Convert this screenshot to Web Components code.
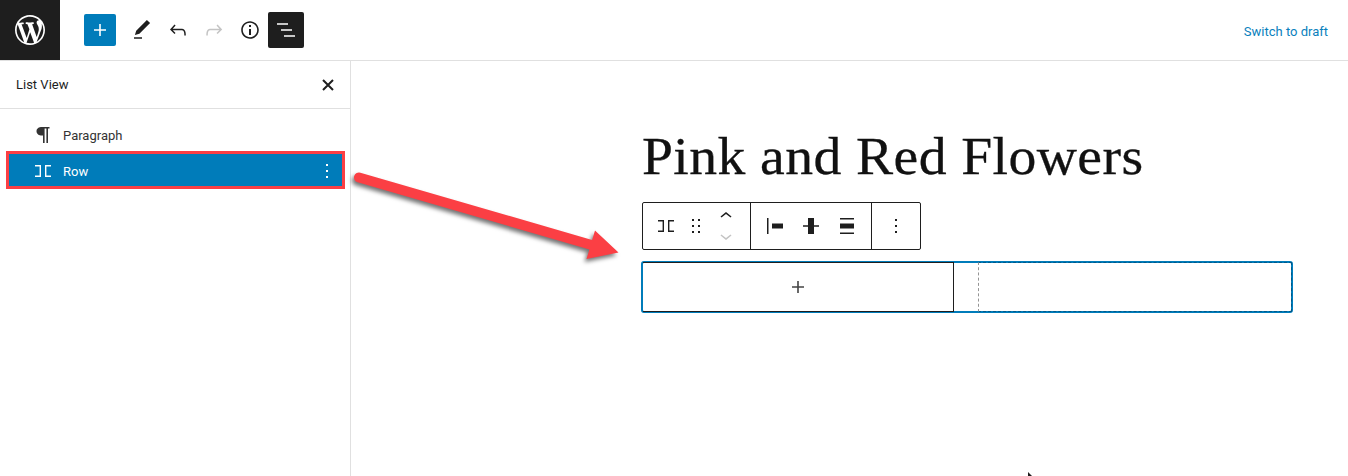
<!DOCTYPE html>
<html lang="en">
<head>
<meta charset="utf-8">
<title>Pink and Red Flowers</title>
<style>
html, body { margin: 0; height: 100%; background: #fff; overflow: hidden; }
body { font-family: Roboto, "Open Sans", sans-serif; color: #1e1e1e; }
</style>
</head>
<body>
<wp-editor>
  <wp-topbar slot="top"></wp-topbar>
  <wp-listview slot="side">
    <wp-listitem icon="paragraph">Paragraph</wp-listitem>
    <wp-listitem icon="row" selected>Row</wp-listitem>
  </wp-listview>
  <wp-canvas slot="main"></wp-canvas>
</wp-editor>

<script>
const ICONS = {
  wp: `<path d="M20 10c0-5.51-4.49-10-10-10C4.48 0 0 4.49 0 10c0 5.52 4.48 10 10 10 5.51 0 10-4.48 10-10zM7.78 15.37L4.37 6.22c.55-.02 1.17-.08 1.17-.08.5-.06.44-1.13-.06-1.11 0 0-1.45.11-2.37.11-.18 0-.37 0-.58-.01C4.12 2.69 6.87 1.11 10 1.11c2.33 0 4.45.87 6.05 2.34-.68-.11-1.65.39-1.65 1.58 0 .74.45 1.36.9 2.1.35.61.55 1.36.55 2.46 0 1.49-1.4 5-1.4 5l-3.03-8.37c.54-.02.82-.17.82-.17.5-.05.44-1.25-.06-1.22 0 0-1.44.12-2.38.12-.87 0-2.33-.12-2.33-.12-.5-.03-.56 1.2-.06 1.22l.92.08 1.26 3.41zM17.41 10c.24-.64.74-1.87.43-4.25.7 1.29 1.05 2.71 1.05 4.25 0 3.29-1.73 6.24-4.4 7.78.97-2.59 1.94-5.2 2.92-7.78zM6.1 18.09C3.12 16.65 1.11 13.53 1.11 10c0-1.3.23-2.48.72-3.59C3.25 10.3 4.67 14.2 6.1 18.09zm4.03-6.63l2.58 6.98c-.86.29-1.76.45-2.71.45-.79 0-1.57-.11-2.29-.33.81-2.38 1.62-4.74 2.42-7.1z"/>`,
  plus: `<path d="M18 11.2h-5.2V6h-1.6v5.2H6v1.6h5.2V18h1.6v-5.2H18z"/>`,
  pencil: `<path d="M20.1 5.1L16.9 2 6.2 12.7l-1.3 4.4 4.5-1.3L20.1 5.1zM4 20.8h8v-1.5H4v1.5z"/>`,
  undo: `<path d="M18.3 11.7c-.6-.6-1.4-.9-2.3-.9H6.7l2.9-3.3-1.1-1-4.5 5L8.5 16l1-1-2.7-2.7H16c.5 0 .9.2 1.3.5 1 1 1 3.4 1 4.5v.3h1.5v-.2c0-1.5 0-4.3-1.5-5.7z"/>`,
  redo: `<path d="M15.6 6.5l-1.1 1 2.9 3.3H8c-.9 0-1.7.3-2.3.9-1.4 1.5-1.4 4.2-1.4 5.6v.2h1.5v-.3c0-1.1 0-3.5 1-4.5.3-.3.7-.5 1.3-.5h9.2L14.5 15l1.1 1.1 4.6-4.6-4.6-5z"/>`,
  info: `<path d="M12 3.2c-4.8 0-8.8 3.9-8.8 8.8 0 4.8 3.9 8.8 8.8 8.8 4.8 0 8.8-3.9 8.8-8.8 0-4.8-4-8.8-8.8-8.8zm0 16c-4 0-7.2-3.3-7.2-7.2C4.8 8 8 4.8 12 4.8s7.2 3.3 7.2 7.2c0 4-3.2 7.2-7.2 7.2zM11 17h2v-6h-2v6zm0-8h2V7h-2v2z"/>`,
  list: `<path d="M3 5.2h11v1.6H3zM7 11.2h11v1.6H7zM10 17.2h11v1.6H10z"/>`,
  close: `<path fill="none" stroke="currentColor" stroke-width="2" d="M7 7l10 10M17 7L7 17"/>`,
  paragraph: `<path d="M11 4h7.5v1.5H17V20h-1.6V5.5h-1.8V20H12v-7.5h-1C8 12.5 5.5 11 5.5 8.2S8 4 11 4z"/>`,
  row: `<path fill="none" stroke="currentColor" stroke-width="1.4" d="M4 6.7h5.3v10.6H4M20 6.7h-5.3v10.6H20"/>`,
  dots: `<path d="M13 19h-2v-2h2v2zm0-6h-2v-2h2v2zm0-6h-2V5h2v2z"/>`,
  drag: `<path d="M8 7h2V5H8v2zm0 6h2v-2H8v2zm0 6h2v-2H8v2zm6-14v2h2V5h-2zm0 8h2v-2h-2v2zm0 6h2v-2h-2v2z"/>`,
  up: `<path d="M6.5 12.4L12 8l5.5 4.4-.9 1.2L12 10l-4.5 3.6-1-1.2z"/>`,
  down: `<path d="M17.5 11.6L12 16l-5.5-4.4.9-1.2L12 14l4.5-3.6 1 1.2z"/>`,
  alignStart: `<path d="M4 4h1.5v16H4zM9 9.5h11v5H9z"/>`,
  alignCenter: `<path d="M4 11.2h16v1.6H4zM9 4h6v16H9z"/>`,
  alignStretch: `<path d="M5 4h14v1.5H5zM5 18.5h14V20H5zM5 9.5h14v5H5z"/>`
};

// small svg icon, pick by name
class WpIcon extends HTMLElement {
  constructor() {
    super();
    this.attachShadow({ mode: "open" });
  }
  connectedCallback() {
    const name = this.getAttribute("name");
    const size = this.getAttribute("size") || 24;
    const box = name === "wp" ? "0 0 20 20" : "0 0 24 24";
    this.shadowRoot.innerHTML = `<style>
:host { display: inline-flex; line-height: 0; }
svg { fill: currentColor; display: block; }
</style><svg width="${size}" height="${size}" viewBox="${box}">${ICONS[name]}</svg>`;
  }
}
customElements.define("wp-icon", WpIcon);

class WpEditor extends HTMLElement {
  constructor() {
    super();
    this.attachShadow({ mode: "open" }).innerHTML = `<style>
:host { display: flex; flex-direction: column; height: 476px; width: 1348px; position: relative; overflow: hidden; }
#body { display: flex; flex: 1; min-height: 0; }
#arrow { position: absolute; left: 340px; top: 160px; filter: drop-shadow(-2px 3px 2px rgba(0,0,0,.55)); }
#cursor { position: absolute; left: 1028px; top: 472px; }
</style>
<slot name="top"></slot>
<div id="body"><slot name="side"></slot><slot name="main"></slot></div>
<svg id="arrow" width="290" height="110" viewBox="0 0 290 110">
  <path fill="#fb3f44" d="M20.4 12.7L252.1 80L255 70.5L278.5 92.5L246.5 99L249.4 89.5L17.6 22.3A5 5 0 0 1 20.4 12.7Z"/>
</svg>
<svg id="cursor" width="8" height="4" viewBox="0 0 8 4"><path d="M0 0l4 4H0z" fill="#1e1e1e"/></svg>`;
  }
}
customElements.define("wp-editor", WpEditor);

class WpTopbar extends HTMLElement {
  constructor() {
    super();
    this.attachShadow({ mode: "open" }).innerHTML = `<style>
:host { display: flex; align-items: center; height: 60px; border-bottom: 1px solid #e0e0e0; flex: none; }
#logo { width: 60px; height: 60px; background: #1e1e1e; color: #fff; display: flex; align-items: center; justify-content: center; }
#tools { display: flex; align-items: center; margin-left: 24px; }
.btn { width: 32px; height: 32px; display: flex; align-items: center; justify-content: center; border-radius: 2px; }
#add { background: #007cba; color: #fff; margin-right: 8px; }
.off { color: #c4c4c4; }
#list { background: #1e1e1e; color: #fff; width: 36px; height: 36px; }
.t { width: 36px; height: 36px; display: flex; align-items: center; justify-content: center; }
#draft { margin-left: auto; margin-right: 20px; color: #0a7fbd; font-size: 13px; padding-top: 2px; }
</style>
<div id="logo"><wp-icon name="wp" size="30"></wp-icon></div>
<div id="tools">
  <div class="btn" id="add"><wp-icon name="plus"></wp-icon></div>
  <div class="t"><wp-icon name="pencil"></wp-icon></div>
  <div class="t"><wp-icon name="undo"></wp-icon></div>
  <div class="t off"><wp-icon name="redo"></wp-icon></div>
  <div class="t"><wp-icon name="info"></wp-icon></div>
  <div class="btn" id="list"><wp-icon name="list"></wp-icon></div>
</div>
<span id="draft">Switch to draft</span>`;
  }
}
customElements.define("wp-topbar", WpTopbar);

class WpListview extends HTMLElement {
  constructor() {
    super();
    this.attachShadow({ mode: "open" }).innerHTML = `<style>
:host { display: flex; flex-direction: column; width: 350px; border-right: 1px solid #e0e0e0; flex: none; }
header { display: flex; align-items: center; justify-content: space-between; height: 47px; padding: 0 10px 0 16px; border-bottom: 1px solid #e0e0e0; font-size: 13px; }
#items { display: flex; flex-direction: column; padding: 8px 5px 0 6px; }
</style>
<header><span>List View</span><wp-icon name="close" size="24"></wp-icon></header>
<div id="items"><slot></slot></div>`;
  }
}
customElements.define("wp-listview", WpListview);

class WpListitem extends HTMLElement {
  constructor() {
    super();
    const icon = this.getAttribute("icon") || "row";
    this.attachShadow({ mode: "open" }).innerHTML = `<style>
:host { display: flex; align-items: center; height: 36px; padding-left: 25px; font-size: 13px; color: #333; box-sizing: border-box; }
:host([selected]) { background: #007cba; color: #fff; border: 3px solid #fb3f44; padding: 2px 0 0 22px; height: 38px; margin-top: -2px; }
#label { margin-left: 8px; flex: 1; }
#menu { display: none; margin-right: 3px; }
:host([selected]) #menu { display: inline-flex; }
</style>
<wp-icon name="${icon}"></wp-icon><span id="label"><slot></slot></span><wp-icon id="menu" name="dots" size="24"></wp-icon>`;
  }
}
customElements.define("wp-listitem", WpListitem);

class WpCanvas extends HTMLElement {
  constructor() {
    super();
    this.attachShadow({ mode: "open" }).innerHTML = `<style>
:host { display: block; flex: 1; padding-left: 291px; }
h1 { margin: 63px 0 0; font: 400 53px/64px "Liberation Serif", serif; letter-spacing: .4px; color: #111; height: 64px; white-space: nowrap; width: max-content; transform: scaleX(1.05); transform-origin: left; -webkit-text-stroke: .3px #111; }
</style>
<h1>Pink and Red Flowers</h1>
<wp-blocktoolbar></wp-blocktoolbar>
<wp-rowblock></wp-rowblock>`;
  }
}
customElements.define("wp-canvas", WpCanvas);

class WpBlocktoolbar extends HTMLElement {
  constructor() {
    super();
    this.attachShadow({ mode: "open" }).innerHTML = `<style>
:host { display: flex; width: 279px; height: 48px; margin-top: 14px; border: 1px solid #1e1e1e; border-radius: 2px; box-sizing: border-box; }
.group { display: flex; align-items: center; border-right: 1px solid #1e1e1e; box-sizing: border-box; }
.group:last-child { border-right: 0; }
#g1 { width: 108px; padding-left: 11px; }
#g2 { width: 121px; padding-left: 6px; }
#g3 { flex: 1; justify-content: center; }
.tool { width: 36px; display: flex; justify-content: center; }
#g1 .tool { width: 24px; }
#g1 .tool.gapped { margin-left: 6px; }
#mover { display: flex; flex-direction: column; height: 40px; align-items: center; margin-left: 6px; }
#mover wp-icon { height: 20px; align-items: center; }
.off { color: #c4c4c4; }
</style>
<div class="group" id="g1">
  <div class="tool"><wp-icon name="row" size="24"></wp-icon></div>
  <div class="tool gapped"><wp-icon name="drag" size="24"></wp-icon></div>
  <div id="mover"><wp-icon name="up" size="24"></wp-icon><wp-icon class="off" name="down" size="24"></wp-icon></div>
</div>
<div class="group" id="g2">
  <div class="tool"><wp-icon name="alignStart"></wp-icon></div>
  <div class="tool"><wp-icon name="alignCenter"></wp-icon></div>
  <div class="tool"><wp-icon name="alignStretch"></wp-icon></div>
</div>
<div class="group" id="g3"><wp-icon name="dots"></wp-icon></div>`;
  }
}
customElements.define("wp-blocktoolbar", WpBlocktoolbar);

class WpRowblock extends HTMLElement {
  constructor() {
    super();
    this.attachShadow({ mode: "open" }).innerHTML = `<style>
:host { display: flex; width: 652px; height: 52px; margin: 11px 0 0 -1px; box-sizing: border-box; border: 2px solid #007cba; border-radius: 3px; }
#appender { width: 311px; margin: -1px 0; border: 1px solid #1e1e1e; border-left: 0; display: flex; align-items: center; justify-content: center; color: #444; box-sizing: border-box; height: 50px; }
#space { width: 24px; }
#drop { flex: 1; margin: -1px -1px -1px 0; border: 1px dashed #00598a; border-left-color: #949494; }
</style>
<div id="appender"><wp-icon name="plus"></wp-icon></div>
<div id="space"></div>
<div id="drop"></div>`;
  }
}
customElements.define("wp-rowblock", WpRowblock);
</script>
</body>
</html>
